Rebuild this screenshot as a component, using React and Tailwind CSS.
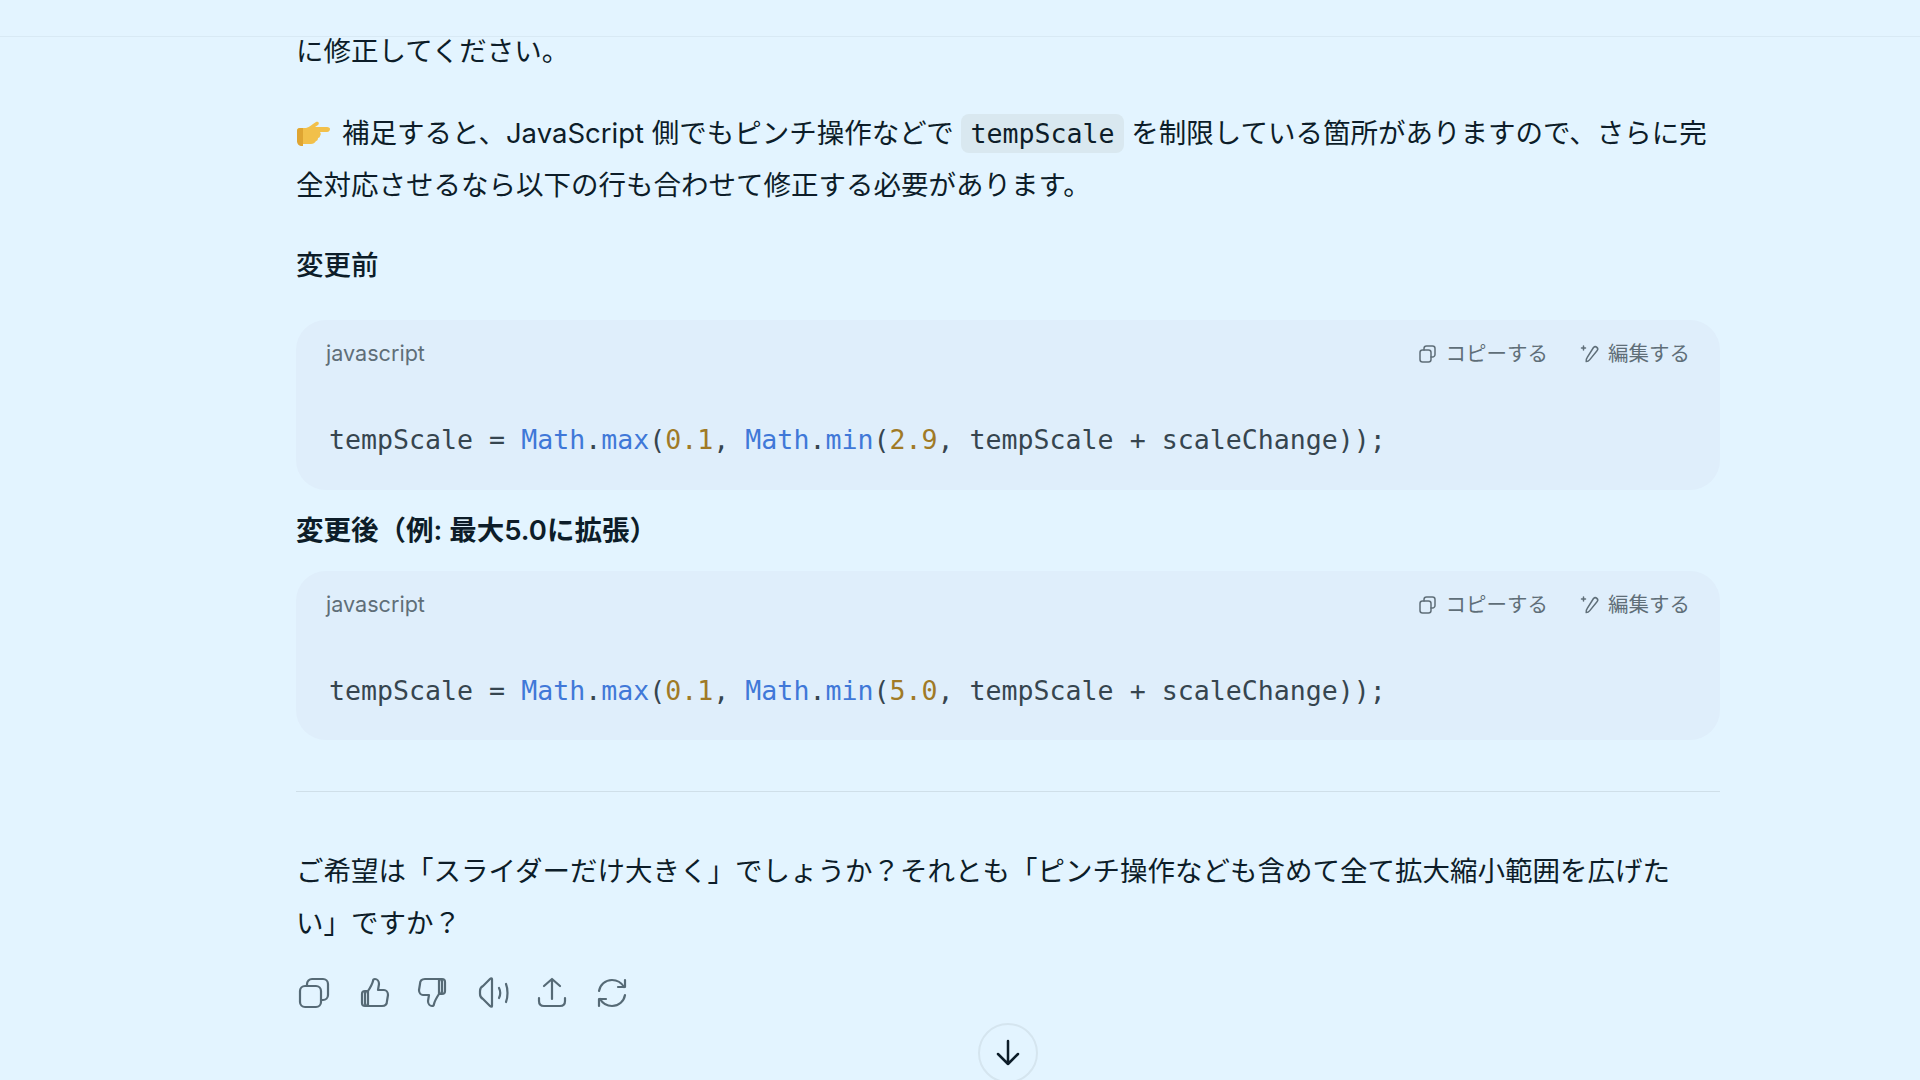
const SANS = { fontFamily: 'Inter, "Noto Sans CJK JP", sans-serif' }
const MONO = { fontFamily: '"DejaVu Sans Mono", monospace' }

function CopySmall() {
  return (
    <svg width="20" height="20" viewBox="0 0 20 20" fill="none" stroke="currentColor" strokeWidth="1.5" strokeLinejoin="round" strokeLinecap="round">
      <rect x="2" y="6" width="11" height="12" rx="2.5" />
      <path d="M6 6V4.500A2.500 2.500 0 0 1 8.500 2h6A2.500 2.500 0 0 1 17 4.500v6a2.500 2.500 0 0 1-2.500 2.500H13" />
    </svg>
  )
}

function EditSmall() {
  return (
    <svg width="20" height="20" viewBox="0 0 20 20" fill="none" stroke="currentColor" strokeWidth="1.5" strokeLinejoin="round" strokeLinecap="round">
      <path d="M13.500 3.500a2.400 2.400 0 0 1 3.500 3.300L9.800 15.600c-1 1.200-2.400 1.900-3.600 1.900-.3-1.300 0-2.700.9-3.800z" />
      <path d="M3.500 2v4M1.500 4h4" />
    </svg>
  )
}

function Pointing() {
  return (
    <svg width="36" height="26" viewBox="0 0 36 26" className="inline-block align-[-3px] mr-[10px]">
      <path d="M1 11c0-2 1-3 3-3h6c4-1 6-4 10-6 2-1 4 1 2 3l-3 2h12c2 0 3 1 3 2s-1 3-3 3H24c1 1 1 3 0 4 0 1-1 2-2 2 0 2-1 3-2 3-1 2-3 3-5 3H6c-3 0-5-2-5-5z" fill="#f2c04a" />
      <path d="M1 11c0-2 1-3 3-3h3v18H6c-3 0-5-2-5-5z" fill="#dfa532" />
    </svg>
  )
}

function CodeBlock({ limit, className }) {
  return (
    <div className={`bg-[#dfeefb] rounded-[30px] pl-[30px] pr-[30px] ${className}`}>
      <div className="flex items-center justify-between h-[68px] text-[#5f6e78]" style={SANS}>
        <span className="text-[21.6px]">javascript</span>
        <div className="flex items-center gap-[32px] text-[20.5px]">
          <span className="flex items-center gap-[8px]"><CopySmall />コピーする</span>
          <span className="flex items-center gap-[8px]"><EditSmall />編集する</span>
        </div>
      </div>
      <pre className="mt-[32px] pl-[3px] text-[26.6px] leading-[40px] text-[#36454f]" style={MONO}>
        tempScale = <span className="text-[#4078d8]">Math</span>.<span className="text-[#4078d8]">max</span>(<span className="text-[#a07a26]">0.1</span>, <span className="text-[#4078d8]">Math</span>.<span className="text-[#4078d8]">min</span>(<span className="text-[#a07a26]">{limit}</span>, tempScale + scaleChange));
      </pre>
    </div>
  )
}

function ActionIcons() {
  return (
    <div className="flex items-center gap-[27.5px] h-[32px] pl-[2px] text-[#566a76]">
      <svg width="32" height="32" viewBox="0 0 32 32" fill="none" stroke="currentColor" strokeWidth="2.2" strokeLinecap="round" strokeLinejoin="round">
        <rect x="2" y="9" width="21" height="21" rx="5" />
        <path d="M9 9V7a5 5 0 0 1 5-5h11a5 5 0 0 1 5 5v11a5 5 0 0 1-5 5h-2" />
      </svg>
      <svg width="32" height="32" viewBox="0 0 32 32" fill="none" stroke="currentColor" strokeWidth="2.2" strokeLinecap="round" strokeLinejoin="round">
        <path d="M10 29h14c3 0 5-2 5-5l1-6c0-3-2-5-4-5h-6l1-6c0-3-2-5-4-5-1 0-2 1-2 2-1 4-3 7-5 10v15z" />
        <path d="M10 14H7c-2 0-3 1-3 3v9c0 2 1 3 3 3h3c-2 0-3-1-3-3v-9c0-2 1-3 3-3z" />
      </svg>
      <svg width="32" height="32" viewBox="0 0 32 32" fill="none" stroke="currentColor" strokeWidth="2.2" strokeLinecap="round" strokeLinejoin="round">
        <path d="M22 2H8C5 2 3 4 3 7l-1 6c0 3 2 5 4 5h6l-1 6c0 3 2 5 4 5 1 0 2-1 2-2 1-4 3-7 5-10V2z" />
        <path d="M22 2h3c2 0 3 1 3 3v9c0 2-1 3-3 3h-3c2 0 3-1 3-3V5c0-2-1-3-3-3z" />
      </svg>
      <svg width="32" height="32" viewBox="0 0 32 32" fill="none" stroke="currentColor" strokeWidth="2.2" strokeLinecap="round" strokeLinejoin="round">
        <path d="M15 2v27c0 1-1 1-2 0l-7-7c-2-1-3-3-3-5v-3c0-2 1-4 3-5l7-7c1-1 2-1 2 0z" />
        <path d="M22 11c1.500 3 1.500 7 0 10M29 7c2 5 2 13 0 18" />
      </svg>
      <svg width="32" height="32" viewBox="0 0 32 32" fill="none" stroke="currentColor" strokeWidth="2.2" strokeLinecap="round" strokeLinejoin="round">
        <path d="M16 22V2M8 9l8-7 8 7" />
        <path d="M3 21v3c0 3 2 5 5 5h16c3 0 5-2 5-5v-3" />
      </svg>
      <svg width="32" height="32" viewBox="0 0 32 32" fill="none" stroke="currentColor" strokeWidth="2.2" strokeLinecap="round" strokeLinejoin="round">
        <path d="M3 14C4 8 9 3 16 3c5 0 9 2 12 7" />
        <path d="M29 18c-1 6-6 11-13 11-5 0-9-2-12-7" />
        <path d="M29 3v7h-7M3 29v-7h7" />
      </svg>
    </div>
  )
}

export default function App() {
  return (
    <main className="h-screen overflow-hidden bg-[#e3f4ff] text-[#0d1d29] text-[27.5px] leading-[51.5px]" style={SANS}>
      <div className="h-[37px] border-b border-[#d8e9f4]"></div>

      <div className="w-[1424px] ml-[296px]">
        <p className="-mt-[11px] h-[52px]">に修正してください。</p>

        <p className="mt-[30px]">
          <Pointing />補足すると、JavaScript 側でもピンチ操作などで{' '}
          <code className="bg-[#d9e8f0] rounded-[8px] px-[9px] py-[4px] text-[26.6px]" style={MONO}>tempScale</code>
          {' '}を制限している箇所がありますので、さらに完<br />全対応させるなら以下の行も合わせて修正する必要があります。
        </p>

        <h3 className="mt-[29px] font-medium">変更前</h3>
        <CodeBlock limit="2.9" className="mt-[28px] h-[170px]" />

        <h3 className="mt-[15px] font-semibold">変更後（例: 最大5.0に拡張）</h3>
        <CodeBlock limit="5.0" className="mt-[15px] h-[169px]" />

        <hr className="mt-[51px] border-[#cfdfe9]" />

        <p className="mt-[54px]">ご希望は「スライダーだけ大きく」でしょうか？それとも「ピンチ操作なども含めて全て拡大縮小範囲を広げた<br />い」ですか？</p>

        <div className="mt-[28px]"><ActionIcons /></div>

        <div className="flex justify-center mt-[14px]">
          <button className="w-[60px] h-[60px] shrink-0 rounded-full border-2 border-[#d5e5ef] flex items-center justify-center text-[#0d1d29]">
            <svg width="30" height="30" viewBox="0 0 30 30" fill="none" stroke="currentColor" strokeWidth="2.5" strokeLinecap="round" strokeLinejoin="round">
              <path d="M15 3v23M5 16l10 10 10-10" />
            </svg>
          </button>
        </div>
      </div>
    </main>
  )
}
